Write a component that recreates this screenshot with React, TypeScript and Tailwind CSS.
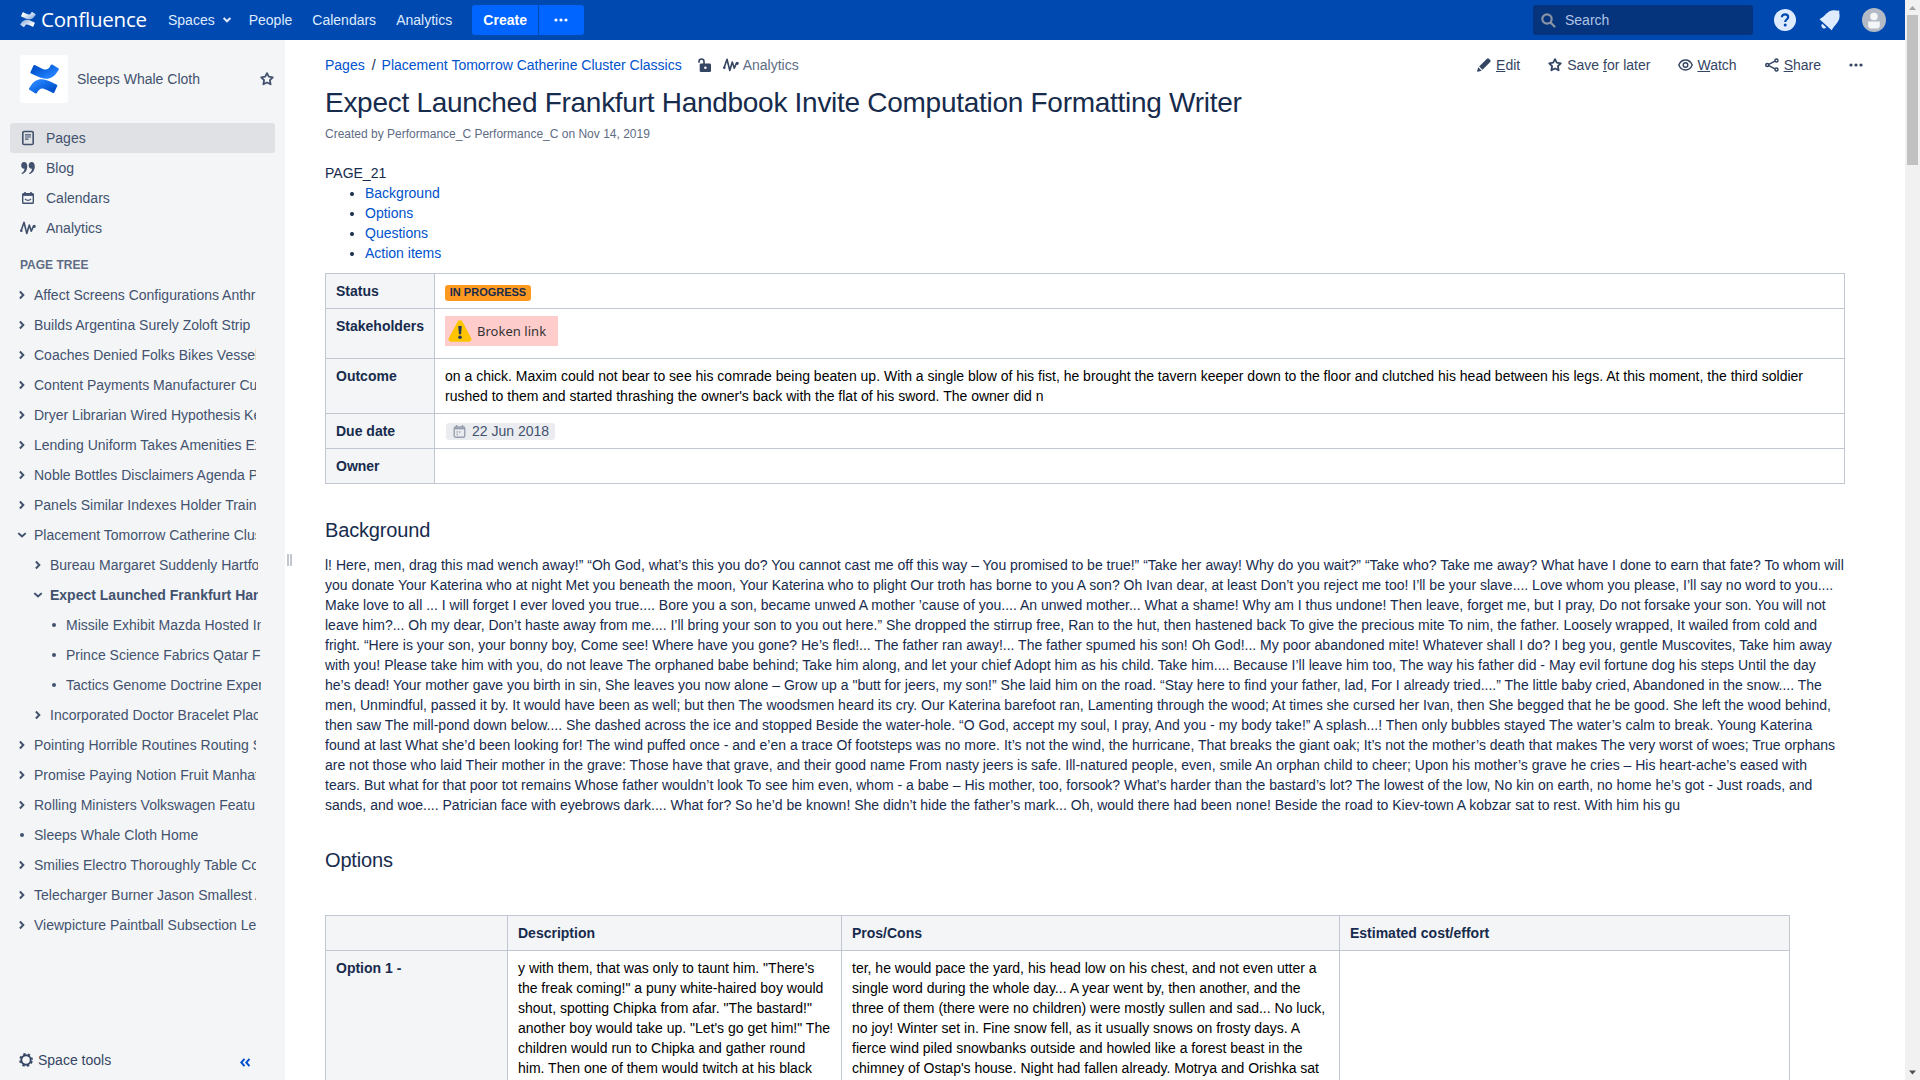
import React from 'react';

const BACKGROUND_LINES = [
  'l! Here, men, drag this mad wench away!” “Oh God, what’s this you do? You cannot cast me off this way – You promised to be true!” “Take her away! Why do you wait?” “Take who? Take me away? What have I done to earn that fate? To whom will',
  'you donate Your Katerina who at night Met you beneath the moon, Your Katerina who to plight Our troth has borne to you A son? Oh Ivan dear, at least Don’t you reject me too! I’ll be your slave.... Love whom you please, I’ll say no word to you....',
  'Make love to all ... I will forget I ever loved you true.... Bore you a son, became unwed A mother ’cause of you.... An unwed mother... What a shame! Why am I thus undone! Then leave, forget me, but I pray, Do not forsake your son. You will not',
  'leave him?... Oh my dear, Don’t haste away from me.... I’ll bring your son to you out here.” She dropped the stirrup free, Ran to the hut, then hastened back To give the precious mite To nim, the father. Loosely wrapped, It wailed from cold and',
  'fright. “Here is your son, your bonny boy, Come see! Where have you gone? He’s fled!... The father ran away!... The father spumed his son! Oh God!... My poor abandoned mite! Whatever shall I do? I beg you, gentle Muscovites, Take him away',
  'with you! Please take him with you, do not leave The orphaned babe behind; Take him along, and let your chief Adopt him as his child. Take him.... Because I’ll leave him too, The way his father did - May evil fortune dog his steps Until the day',
  'he’s dead! Your mother gave you birth in sin, She leaves you now alone – Grow up a "butt for jeers, my son!” She laid him on the road. “Stay here to find your father, lad, For I already tried....” The little baby cried, Abandoned in the snow.... The',
  'men, Unmindful, passed it by. It would have been as well; but then The woodsmen heard its cry. Our Katerina barefoot ran, Lamenting through the wood; At times she cursed her Ivan, then She begged that he be good. She left the wood behind,',
  'then saw The mill-pond down below.... She dashed across the ice and stopped Beside the water-hole. “O God, accept my soul, I pray, And you - my body take!” A splash...! Then only bubbles stayed The water’s calm to break. Young Katerina',
  'found at last What she’d been looking for! The wind puffed once - and e’en a trace Of footsteps was no more. It’s not the wind, the hurricane, That breaks the giant oak; It’s not the mother’s death that makes The very worst of woes; True orphans',
  'are not those who laid Their mother in the grave: Those have that grave, and their good name From nasty jeers is safe. Ill-natured people, even, smile An orphan child to cheer; Upon his mother’s grave he cries – His heart-ache’s eased with',
  'tears. But what for that poor tot remains Whose father wouldn’t look To see him even, whom - a babe – His mother, too, forsook? What’s harder than the bastard’s lot? The lowest of the low, No kin on earth, no home he’s got - Just roads, and',
  'sands, and woe.... Patrician face with eyebrows dark.... What for? So he’d be known! She didn’t hide the father’s mark... Oh, would there had been none! Beside the road to Kiev-town A kobzar sat to rest. With him his gu',
];

const DESCRIPTION =
  'y with them, that was only to taunt him. "There\'s the freak coming!" a puny white-haired boy would shout, spotting Chipka from afar. "The bastard!" another boy would take up. "Let\'s go get him!" The children would run to Chipka and gather round him. Then one of them would twitch at his black';
const PROS =
  "ter, he would pace the yard, his head low on his chest, and not even utter a single word during the whole day... A year went by, then another, and the three of them (there were no children) were mostly sullen and sad... No luck, no joy! Winter set in. Fine snow fell, as it usually snows on frosty days. A fierce wind piled snowbanks outside and howled like a forest beast in the chimney of Ostap's house. Night had fallen already. Motrya and Orishka sat";

type Kind = 'closed' | 'open' | 'leaf';
interface TreeItem {
  label: string;
  level: 0 | 1 | 2;
  kind: Kind;
  current?: boolean;
}

const TREE: TreeItem[] = [
  { label: 'Affect Screens Configurations Anthr', level: 0, kind: 'closed' },
  { label: 'Builds Argentina Surely Zoloft Strip', level: 0, kind: 'closed' },
  { label: 'Coaches Denied Folks Bikes Vessel', level: 0, kind: 'closed' },
  { label: 'Content Payments Manufacturer Cu', level: 0, kind: 'closed' },
  { label: 'Dryer Librarian Wired Hypothesis Ke', level: 0, kind: 'closed' },
  { label: 'Lending Uniform Takes Amenities Ex', level: 0, kind: 'closed' },
  { label: 'Noble Bottles Disclaimers Agenda P', level: 0, kind: 'closed' },
  { label: 'Panels Similar Indexes Holder Train', level: 0, kind: 'closed' },
  { label: 'Placement Tomorrow Catherine Clus', level: 0, kind: 'open' },
  { label: 'Bureau Margaret Suddenly Hartfo', level: 1, kind: 'closed' },
  { label: 'Expect Launched Frankfurt Han', level: 1, kind: 'open', current: true },
  { label: 'Missile Exhibit Mazda Hosted In', level: 2, kind: 'leaf' },
  { label: 'Prince Science Fabrics Qatar F', level: 2, kind: 'leaf' },
  { label: 'Tactics Genome Doctrine Exper', level: 2, kind: 'leaf' },
  { label: 'Incorporated Doctor Bracelet Plac', level: 1, kind: 'closed' },
  { label: 'Pointing Horrible Routines Routing S', level: 0, kind: 'closed' },
  { label: 'Promise Paying Notion Fruit Manhat', level: 0, kind: 'closed' },
  { label: 'Rolling Ministers Volkswagen Featu', level: 0, kind: 'closed' },
  { label: 'Sleeps Whale Cloth Home', level: 0, kind: 'leaf' },
  { label: 'Smilies Electro Thoroughly Table Co', level: 0, kind: 'closed' },
  { label: 'Telecharger Burner Jason Smallest A', level: 0, kind: 'closed' },
  { label: 'Viewpicture Paintball Subsection Le', level: 0, kind: 'closed' },
];

const LEVEL_PAD = ['pl-4', 'pl-8', 'pl-12'];
const LEVEL_WIDTH = ['w-[222px]', 'w-[208px]', 'w-[195px]'];

function Logo({ className, from, to }: { className: string; from: string; to: string }) {
  const id = 'logo' + from.slice(1);
  return (
    <svg className={className} viewBox="0 0 64 62">
      <defs>
        <linearGradient id={id + 'a'} x1="1" y1="0.9" x2="0.2" y2="0.2">
          <stop offset="0.2" stopColor={from} />
          <stop offset="1" stopColor={to} />
        </linearGradient>
        <linearGradient id={id + 'b'} x1="0" y1="0.1" x2="0.8" y2="0.8">
          <stop offset="0.2" stopColor={from} />
          <stop offset="1" stopColor={to} />
        </linearGradient>
      </defs>
      <path
        fill={`url(#${id}b)`}
        d="M2.3 47.6c-.7 1.1-1.4 2.3-2 3.3a2 2 0 0 0 .7 2.8l13 8a2 2 0 0 0 2.8-.7c.5-.9 1.2-2 1.9-3.3 5.2-8.5 10.3-7.5 19.6-3.1l13 6.2a2 2 0 0 0 2.7-1l6.2-14.1a2 2 0 0 0-1-2.7c-2.7-1.3-8.200-3.900-13-6.200C28.500 28.300 13.500 29 2.300 47.600z"
      />
      <path
        fill={`url(#${id}a)`}
        d="M61.3 14.4c.7-1.1 1.4-2.3 2-3.3a2 2 0 0 0-.7-2.8l-13-8a2 2 0 0 0-2.9.7c-.5.9-1.2 2-1.9 3.3-5.2 8.5-10.3 7.5-19.6 3.1L12.2 1.200a2 2 0 0 0-2.700 1L3.300 16.300a2 2 0 0 0 1 2.700c2.700 1.300 8.200 3.900 13 6.200 17.700 8.500 32.700 7.700 44-10.800z"
      />
    </svg>
  );
}

function Star() {
  return (
    <svg className="size-4 shrink-0" viewBox="0 0 16 16" fill="none" stroke="currentColor" strokeWidth="1.8" strokeLinejoin="round">
      <path d="M8 2.1l1.800 3.600 4 .6-2.900 2.900.700 4.100L8 11.500 4.400 13.300l.7-4.100L2.200 6.300l4-.6z" />
    </svg>
  );
}

function Pulse() {
  return (
    <svg className="h-3.5 w-4 shrink-0" viewBox="0 0 16 14" fill="none" stroke="currentColor" strokeWidth="1.6" strokeLinecap="round" strokeLinejoin="round">
      <path d="M1.200 9.400L4 1.300l2.800 11.200L9.300 4l2 6.200 1.900-4.400" />
      <circle cx="14.2" cy="5.3" r=".8" fill="currentColor" />
      <circle cx="1.3" cy="9.7" r=".5" fill="currentColor" />
    </svg>
  );
}

function Dots() {
  return (
    <svg className="h-1 w-3.5" viewBox="0 0 14 4" fill="currentColor">
      <circle cx="2" cy="2" r="1.6" />
      <circle cx="7" cy="2" r="1.6" />
      <circle cx="12" cy="2" r="1.6" />
    </svg>
  );
}

function TreeMark({ kind }: { kind: Kind }) {
  if (kind === 'leaf') return <span className="size-1 rounded-full bg-[#42526e]" />;
  return (
    <svg className="h-2.5 w-2.5" viewBox="0 0 10 10" fill="none" stroke="#42526e" strokeWidth="2" strokeLinecap="square">
      <path d={kind === 'open' ? 'M2 3.8l3 2.7 3-2.7' : 'M3.6 2.2L6.3 5 3.6 7.8'} />
    </svg>
  );
}

function Header() {
  return (
    <header className="flex h-10 shrink-0 items-center bg-[#0049b0] pl-5 pr-5 text-[#deebff]">
      <Logo className="mb-0.5 h-[15px] w-4" from="#9db9e3" to="#ffffff" />
      <span className="mb-0.5 ml-[5px] w-[107px] whitespace-nowrap font-['Open_Sans','Noto_Sans',sans-serif] text-[20.5px] leading-5 tracking-[-0.2px] text-white">
        Confluence
      </span>
      <nav className="ml-5 flex items-center">
        <a className="flex items-center">
          Spaces
          <svg className="ml-2 h-2 w-2" viewBox="0 0 8 8" fill="none" stroke="currentColor" strokeWidth="2">
            <path d="M.6 2L4 5.300 7.400 2" />
          </svg>
        </a>
        <a className="ml-[18px]">People</a>
        <a className="ml-5">Calendars</a>
        <a className="ml-5">Analytics</a>
      </nav>
      <div className="ml-5 flex h-[30px] gap-px overflow-hidden rounded-[3px] font-bold text-white">
        <span className="flex w-[66px] items-center justify-center bg-[#0065ff]">Create</span>
        <span className="flex w-[45px] items-center justify-center bg-[#0065ff] pr-0.5">
          <Dots />
        </span>
      </div>
      <div className="ml-auto flex h-[30px] w-[220px] items-center rounded-[3px] bg-[#05337c] pl-2 text-[#b0c5e6]">
        <svg className="size-[15px]" viewBox="0 0 15 15" fill="none" stroke="#8993a4" strokeWidth="2.2">
          <circle cx="6" cy="6" r="4.7" />
          <path d="M9.6 9.6l3.900 3.900" strokeLinecap="round" />
        </svg>
        <span className="ml-[9px]">Search</span>
      </div>
      <svg className="ml-[21px] size-[22px]" viewBox="0 0 22 22">
        <circle cx="11" cy="11" r="11" fill="#deebff" />
        <path d="M7.900 8.300c0-1.900 1.300-3 3.200-3s3.100 1.100 3.100 2.700c0 1.400-.8 2-1.700 2.700-.9.600-1.300 1-1.300 2.200" fill="none" stroke="#0049b0" strokeWidth="2.2" />
        <circle cx="11.2" cy="16" r="1.500" fill="#0049b0" />
      </svg>
      <svg className="ml-[23px] size-[21px]" viewBox="0 0 21 21" fill="#deebff">
        <path d="M.5 9.200c1.500-1.100 3-1.500 4.500-3.100C8 3 10.500.4 14.500.3c1.700 0 2.900.3 3.900.4.700 0 1.300-.3 1.800 0 .3.500 0 1.100 0 1.800.1 1 .5 2.200.4 3.900-.2 3.900-2.400 6.500-5 9.500-1.500 1.600-2 2.700-2.900 4.300z" />
        <path d="M3.300 13.800l4 3.800a2.600 2.600 0 0 1-4-3.800z" />
      </svg>
      <svg className="ml-[22px] mr-[-1px] size-6" viewBox="0 0 24 24">
        <circle cx="12" cy="12" r="12" fill="#b3bac5" />
        <circle cx="12" cy="8.5" r="3.8" fill="#f4f5f7" />
        <path d="M6.200 13.500h11.600v4.200c0 1.600-1.100 2.700-2.700 2.700H8.900c-1.600 0-2.700-1.100-2.700-2.700z" fill="#f4f5f7" />
      </svg>
    </header>
  );
}

function NavIcon({ name }: { name: string }) {
  if (name === 'Pages')
    return (
      <svg className="h-4 w-3" viewBox="0 0 12 16" fill="none" stroke="currentColor">
        <rect x=".8" y="1.5" width="10.4" height="13" rx="1.3" strokeWidth="1.6" />
        <path d="M3 4.800h6M3 7h6M3 9.200h3.500" strokeWidth="1.2" />
      </svg>
    );
  if (name === 'Blog')
    return (
      <svg className="h-3 w-3.5" viewBox="0 0 14 12" fill="currentColor">
        <path d="M3 0c2 0 3.300 1.500 3.300 4.200C6.300 8.200 4.200 11.300 1 12l-.5-.9c1.700-.8 2.800-2.300 3-4.400C1.300 6.900.2 5.300.2 3.200.2 1.300 1.300 0 3 0zM10.500 0c2 0 3.300 1.500 3.300 4.200 0 4-2.100 7.100-5.300 7.800l-.5-.9c1.700-.8 2.800-2.300 3-4.400-2.200.2-3.300-1.400-3.300-3.500C7.700 1.300 8.800 0 10.500 0z" />
      </svg>
    );
  if (name === 'Calendars')
    return (
      <svg className="size-3" viewBox="0 0 12 12" fill="none" stroke="currentColor">
        <rect x=".7" y="1.8" width="10.6" height="9.5" rx=".8" strokeWidth="1.4" />
        <path d="M.5 2.900h11" strokeWidth="2" />
        <path d="M3 0v2M9 0v2" strokeWidth="1.6" />
        <path d="M3 6.900c1.500 1.900 4.500 1.900 6 0" strokeWidth="1.2" />
      </svg>
    );
  return <Pulse />;
}

function Sidebar() {
  return (
    <aside className="flex w-[285px] shrink-0 flex-col bg-[#f4f5f7] text-[#42526e]">
      <div className="flex items-center pl-5 pr-[10px] pt-[15px]">
        <div className="flex size-12 items-center justify-center rounded-[3px] bg-white">
          <Logo className="size-[30px]" from="#2684ff" to="#0052cc" />
        </div>
        <span className="ml-[9px] flex-1">Sleeps Whale Cloth</span>
        <Star />
      </div>
      <nav className="mt-5 flex flex-col px-[10px]">
        {['Pages', 'Blog', 'Calendars', 'Analytics'].map((n) => (
          <a key={n} className={'flex h-[30px] items-center rounded-[3px] ' + (n === 'Pages' ? 'bg-[#dfe1e5]' : '')}>
            <span className="flex w-9 items-center justify-center">
              <NavIcon name={n} />
            </span>
            {n}
          </a>
        ))}
      </nav>
      <h5 className="mt-3 h-5 pl-5 text-xs font-bold leading-5 text-[#5e6c84]">PAGE TREE</h5>
      <ul className="mt-[5px] flex flex-col">
        {TREE.map((t) => (
          <li key={t.label} className={'flex h-[30px] items-center ' + LEVEL_PAD[t.level]}>
            <span className="flex w-3 items-center justify-center">
              <TreeMark kind={t.kind} />
            </span>
            <span className={'ml-1.5 overflow-hidden whitespace-nowrap ' + LEVEL_WIDTH[t.level] + (t.current ? ' font-bold' : '')}>
              {t.label}
            </span>
          </li>
        ))}
      </ul>
      <div className="mt-auto flex h-10 items-center pl-[19px] text-[#344563]">
        <svg className="size-3.5" viewBox="0 0 14 14" fill="none" stroke="currentColor">
          <circle cx="7" cy="7" r="4.7" strokeWidth="1.9" />
          <circle cx="7" cy="7" r="6.1" strokeWidth="1.6" strokeDasharray="2.4 2.39" strokeDashoffset="-1.2" />
        </svg>
        <span className="ml-[5px]">Space tools</span>
        <svg className="ml-auto mr-[35px] mt-1 h-[9px] w-[10px]" viewBox="0 0 10 9" fill="none" stroke="#0052cc" strokeWidth="2">
          <path d="M4.500.8L1.300 4.500l3.200 3.700M9.500.8L6.300 4.500l3.200 3.700" />
        </svg>
      </div>
    </aside>
  );
}

function Toolbar() {
  return (
    <div className="flex items-center text-[#344563]">
      <svg className="size-3.5" viewBox="0 0 14 14" fill="currentColor">
        <path d="M9.900.8a1.500 1.500 0 0 1 2 0l1.300 1.300a1.500 1.500 0 0 1 0 2l-7.700 7.700-3.300-3.300zM1.300 9.300l3.400 3.400L.8 13.800a.6.6 0 0 1-.7-.7z" />
      </svg>
      <span className="ml-[5px]"><u>E</u>dit</span>
      <span className="ml-[27px] flex items-center">
        <Star />
        <span className="ml-1">Save <u>f</u>or later</span>
      </span>
      <svg className="ml-7 h-3 w-[15px]" viewBox="0 0 15 12" fill="none" stroke="currentColor" strokeWidth="1.4">
        <path d="M.8 6C2.200 2.700 4.700 1 7.500 1s5.300 1.700 6.700 5c-1.400 3.300-3.900 5-6.700 5S2.200 9.300.8 6z" />
        <circle cx="7.5" cy="6" r="2.3" />
      </svg>
      <span className="ml-1"><u>W</u>atch</span>
      <svg className="ml-7 size-[14px]" viewBox="0 0 15 15" fill="none" stroke="currentColor" strokeWidth="1.6">
        <circle cx="2.4" cy="7.5" r="1.6" />
        <circle cx="12.3" cy="2.7" r="1.6" />
        <circle cx="12.3" cy="12.3" r="1.6" />
        <path d="M4 6.800l6.800-3.400M4 8.200l6.800 3.400" />
      </svg>
      <span className="ml-[5px]"><u>S</u>hare</span>
      <span className="ml-7"><Dots /></span>
    </div>
  );
}

const TH = 'border border-[#c1c7d0] bg-[#f4f5f7] px-[10px] py-[7px] text-left align-top font-bold text-[#172b4d]';
const TD = 'border border-[#c1c7d0] px-[10px] py-[7px] align-top text-black';

function Content() {
  return (
    <main className="relative flex-1 overflow-hidden pl-10 text-[#172b4d]">
      <div className="absolute left-[2px] top-[514px] flex h-3 gap-px">
        <span className="w-0.5 bg-[#c1c7d0]" />
        <span className="w-0.5 bg-[#c1c7d0]" />
      </div>
      <div className="flex h-[50px] items-center justify-between pr-[42px]">
        <div className="flex items-center">
          <a className="text-[#0052cc]">Pages</a>
          <span className="ml-[7px] mr-1.5">/</span>
          <a className="text-[#0052cc]">Placement Tomorrow Catherine Cluster Classics</a>
          <svg className="ml-4 h-3.5 w-[13px]" viewBox="0 0 13 14">
            <path d="M1 4.800V3.500a2.500 2.500 0 0 1 5 0V6" fill="none" stroke="#344563" strokeWidth="1.6" />
            <rect x="1.7" y="5.5" width="11.3" height="8.5" rx="1.3" fill="#344563" />
            <circle cx="7.4" cy="9.7" r="1.3" fill="#fff" />
          </svg>
          <span className="ml-3 flex items-center text-[#5e6c84]">
            <span className="text-[#344563]"><Pulse /></span>
            <span className="ml-1">Analytics</span>
          </span>
        </div>
        <Toolbar />
      </div>
      <h1 className="-mt-[3px] h-8 whitespace-nowrap text-[28px] leading-8 tracking-[-0.01em]">
        Expect Launched Frankfurt Handbook Invite Computation Formatting Writer
      </h1>
      <p className="mt-[5px] h-5 text-xs leading-5 text-[#5e6c84]">Created by Performance_C Performance_C on Nov 14, 2019</p>
      <p className="mt-[19px]">PAGE_21</p>
      <ul className="ml-10 list-disc text-[#172b4d]">
        {['Background', 'Options', 'Questions', 'Action items'].map((t) => (
          <li key={t}><a className="text-[#0052cc]">{t}</a></li>
        ))}
      </ul>
      <table className="mt-[10px] w-[1520px] table-fixed border-collapse">
        <colgroup>
          <col className="w-[109px]" />
          <col />
        </colgroup>
        <tbody>
          <tr className="h-[35px]">
            <th className={TH}>Status</th>
            <td className={TD}>
              <span className="mt-1 flex h-4 w-[86px] items-center justify-center whitespace-nowrap rounded-[3px] bg-[#ff991f] pb-px text-[11px] font-bold leading-[15px] text-[#172b4d]">
                IN PROGRESS
              </span>
            </td>
          </tr>
          <tr className="h-[50px]">
            <th className={TH}>Stakeholders</th>
            <td className={TD}>
              <span className="flex h-[30px] w-[113px] items-center bg-[#ffcccc] pl-[3px]">
                <svg className="h-[22px] w-6" viewBox="0 0 24 22">
                  <path d="M9.700 1.600a2.700 2.700 0 0 1 4.700 0l8.700 16.500a2.400 2.400 0 0 1-2.200 3.600H3.100a2.400 2.400 0 0 1-2.200-3.600z" fill="#ffc400" />
                  <path d="M10.300 6h3.400l-.6 8.200h-2.200z" fill="#253858" />
                  <circle cx="12" cy="17.3" r="1.8" fill="#253858" />
                </svg>
                <span className="ml-[5px] whitespace-nowrap font-['Noto_Sans','Open_Sans',sans-serif] text-[13px] tracking-[0.03px] text-[#333333]">
                  Broken link
                </span>
              </span>
            </td>
          </tr>
          <tr className="h-[55px]">
            <th className={TH}>Outcome</th>
            <td className={TD}>
              on a chick. Maxim could not bear to see his comrade being beaten up. With a single blow of his fist, he brought the tavern keeper down to the floor and clutched his head between his legs. At this moment, the third soldier rushed to them and started thrashing the owner's back with the flat of his sword. The owner did n
            </td>
          </tr>
          <tr className="h-[35px]">
            <th className={TH}>Due date</th>
            <td className={TD}>
              <span className="ml-px mt-[2px] flex h-[17px] w-[109px] items-center rounded-[3px] bg-[#ebecf0] pl-[7px] text-[#42526e]">
                <svg className="h-[13px] w-[13px]" viewBox="0 0 13 13" fill="none" stroke="#97a0af">
                  <rect x="1.200" y="2" width="10.6" height="10.2" rx="1.5" strokeWidth="1.4" />
                  <path d="M1 3.500h11" strokeWidth="1.8" />
                  <path d="M3.500 0v3M9.500 0v3" strokeWidth="1.5" />
                  <path d="M3.500 7h1.300M6 7h1.300M3.500 9.500h1.300" strokeWidth="1.3" />
                </svg>
                <span className="mb-0.5 ml-[6px] whitespace-nowrap leading-4">22 Jun 2018</span>
              </span>
            </td>
          </tr>
          <tr className="h-[35px]">
            <th className={TH}>Owner</th>
            <td className={TD} />
          </tr>
        </tbody>
      </table>
      <h2 className="mt-[34px] h-6 text-xl leading-6 tracking-[-0.008em]">Background</h2>
      <div className="mt-[13px]">
        {BACKGROUND_LINES.map((l) => (
          <p key={l} className="whitespace-nowrap">{l}</p>
        ))}
      </div>
      <h2 className="mt-[33px] h-6 text-xl leading-6 tracking-[-0.008em]">Options</h2>
      <table className="mt-[43px] w-[1465px] table-fixed border-collapse">
        <colgroup>
          <col className="w-[182px]" />
          <col className="w-[334px]" />
          <col className="w-[498px]" />
          <col />
        </colgroup>
        <tbody>
          <tr className="h-[35px]">
            <th className={TH} />
            <th className={TH}>Description</th>
            <th className={TH}>Pros/Cons</th>
            <th className={TH}>Estimated cost/effort</th>
          </tr>
          <tr className="h-[155px]">
            <th className={TH}>Option 1 -</th>
            <td className={TD}>{DESCRIPTION}</td>
            <td className={TD}>{PROS}</td>
            <td className={TD} />
          </tr>
        </tbody>
      </table>
    </main>
  );
}

export default function App() {
  return (
    <div className="flex h-[1080px] w-[1920px] overflow-hidden bg-white font-['Liberation_Sans',Arial,sans-serif] text-sm leading-5">
      <div className="flex min-w-0 flex-1 flex-col">
        <Header />
        <div className="flex min-h-0 flex-1">
          <Sidebar />
          <Content />
        </div>
      </div>
      <div className="flex w-[15px] flex-col items-center bg-[#f1f1f1]">
        <svg className="h-[15px] w-[15px]" viewBox="0 0 15 15">
          <path d="M4 10L7.500 6 11 10z" fill="#a3a3a3" />
        </svg>
        <div className="h-[150px] w-[11px] bg-[#c1c1c1]" />
        <svg className="mt-auto h-[15px] w-[15px]" viewBox="0 0 15 15">
          <path d="M4 5.500L7.500 9.500 11 5.500z" fill="#505050" />
        </svg>
      </div>
    </div>
  );
}
